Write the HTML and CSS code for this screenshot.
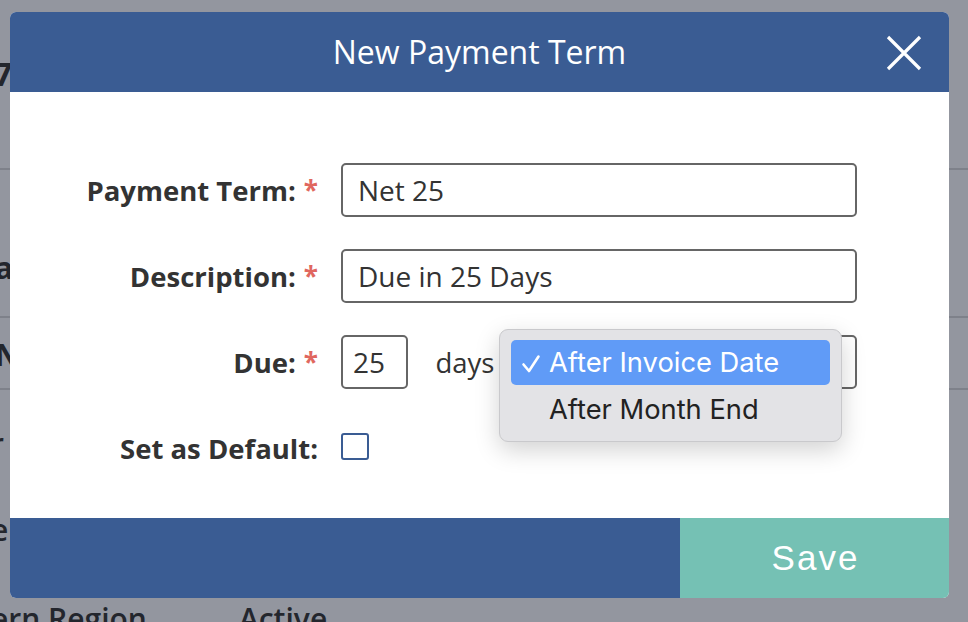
FILE: index.html
```html
<!DOCTYPE html>
<html>
<head>
<meta charset="utf-8">
<link rel="stylesheet" href="styles.css">
</head>
<body>
<div class="page">
  <div class="bg-row r1"><span class="bg-big">7</span></div>
  <div class="bg-row r2"><span class="bg-b">a</span></div>
  <div class="bg-row r3"><span class="bg-b">N</span></div>
  <div class="bg-row r4"><span class="bg-n">r</span></div>
  <div class="bg-row r5"><span class="bg-n">e</span></div>
  <div class="bg-row r6"><span class="bg-n">ern Region</span><span class="bg-n act">Active</span></div>
</div>

<div class="modal">
  <div class="modal-header">
    <h1 class="modal-title">New Payment Term</h1>
    <button class="close" aria-label="Close">
      <svg width="36" height="36" viewBox="0 0 36 36"><path d="M2 2 L34 34 M34 2 L2 34" stroke="#fff" stroke-width="3.2" stroke-linecap="butt" fill="none"/></svg>
    </button>
  </div>
  <form class="modal-body">
    <label class="lbl">Payment Term:<span class="req">*</span></label>
    <div class="field"><div class="input wide">Net 25</div></div>

    <label class="lbl">Description:<span class="req">*</span></label>
    <div class="field"><div class="input wide">Due in 25 Days</div></div>

    <label class="lbl">Due:<span class="req">*</span></label>
    <div class="field due">
      <div class="input small">25</div>
      <span class="days">days</span>
      <div class="select"></div>
      <div class="popup">
        <div class="opt sel"><svg class="check" width="20" height="20" viewBox="0 0 20 20"><path d="M2.5 10.5 L8 17 L17.5 2.5" stroke="#fff" stroke-width="2.6" fill="none" stroke-linecap="round" stroke-linejoin="round"/></svg>After Invoice Date</div>
        <div class="opt">After Month End</div>
      </div>
    </div>

    <label class="lbl">Set as Default:</label>
    <div class="field"><span class="checkbox"></span></div>
  </form>
  <div class="modal-footer">
    <div class="spacer"></div>
    <button class="save">Save</button>
  </div>
</div>
</body>
</html>
```
FILE: styles.css
```css
* { box-sizing: border-box; }
html, body { margin: 0; padding: 0; }
body {
  width: 968px;
  height: 622px;
  overflow: hidden;
  background: #93969f;
  font-family: "Open Sans", "Noto Sans", sans-serif;
  position: relative;
}

/* dimmed page behind the overlay */
.page { display: flex; flex-direction: column; }
.bg-row {
  display: flex;
  align-items: flex-start;
  color: #23262d;
  border-bottom: 2px solid #7e818a;
  line-height: 36px;
}
.bg-row.r1 { height: 170px; padding-top: 56px; }
.bg-row.r2 { height: 148px; padding-top: 80px; }
.bg-row.r3 { height: 72px; padding-top: 19px; }
.bg-row.r4 { height: 90px; padding-top: 36px; border-bottom: none; }
.bg-row.r5 { height: 90px; padding-top: 32px; border-bottom: none; }
.bg-row.r6 { height: 52px; padding-top: 31px; border-bottom: none; }
.bg-big { font-size: 32px; font-weight: 700; margin-left: -6px; }
.bg-b { font-size: 30px; font-weight: 700; margin-left: -5px; }
.bg-n { font-size: 30px; font-weight: 600; margin-left: -9px; }
.bg-n.act { margin-left: 92px; }

/* modal */
.modal {
  position: absolute;
  left: 10px;
  top: 12px;
  width: 939px;
  height: 586px;
  background: #fff;
  border-radius: 6px;
  overflow: hidden;
  display: flex;
  flex-direction: column;
}
.modal-header {
  height: 80px;
  background: #3a5c93;
  display: flex;
  align-items: center;
  justify-content: center;
  position: relative;
}
.modal-title {
  margin: 0 0 2px 0;
  color: #fff;
  font-weight: 400;
  font-size: 32px;
}
.close {
  position: absolute;
  right: 27px;
  top: 23px;
  width: 36px;
  height: 36px;
  padding: 0;
  border: none;
  background: none;
}
.close svg { display: block; }

.modal-body {
  flex: 1;
  margin: 0;
  padding-top: 71px;
  display: grid;
  grid-template-columns: 308px 516px;
  grid-auto-rows: 54px;
  column-gap: 23px;
  row-gap: 32px;
  align-content: start;
}
.lbl {
  display: flex;
  align-items: center;
  justify-content: flex-end;
  font-weight: 700;
  font-size: 27.5px;
  color: #333;
  white-space: nowrap;
}
.req {
  color: #e0675f;
  margin-left: 8px;
  font-size: 26px;
}
.field {
  display: flex;
  align-items: center;
  position: relative;
}
.input {
  border: 2px solid #666;
  border-radius: 5px;
  height: 54px;
  display: flex;
  align-items: center;
  padding-left: 15px;
  font-size: 28px;
  color: #333;
}
.input.wide { width: 516px; }
.input.small { width: 68px; padding-left: 10px; }
.days {
  margin-left: 27px;
  font-size: 27.5px;
  color: #333;
}
.select {
  margin-left: 6px;
  width: 360px;
  height: 54px;
  border: 2px solid #666;
  border-radius: 5px;
}
.popup {
  position: absolute;
  left: 158px;
  top: -6px;
  width: 343px;
  height: 113px;
  background: #e3e3e6;
  border: 1px solid #c9c9cc;
  border-radius: 9px;
  box-shadow: 0 8px 24px rgba(0,0,0,0.18);
  padding: 10px 11px;
  font-family: "Inter", "Liberation Sans", sans-serif;
}
.opt {
  height: 45px;
  display: flex;
  align-items: center;
  padding-left: 38px;
  font-size: 27.3px;
  color: #222;
  position: relative;
  border-radius: 5px;
}
.opt + .opt { padding-top: 4px; }
.opt.sel {
  background: #609bf7;
  color: #fff;
}
.check {
  position: absolute;
  left: 10px;
  top: 14px;
}
.checkbox {
  width: 28px;
  height: 27px;
  border: 2px solid #3a5c93;
  border-radius: 3px;
  margin-top: -3px;
}

.modal-footer {
  height: 80px;
  display: flex;
}
.spacer { flex: 1; background: #3a5c93; }
.save {
  width: 269px;
  border: none;
  background: #75c1b4;
  color: #fff;
  font-family: "Liberation Sans", Arial, sans-serif;
  font-size: 35px;
  letter-spacing: 2px;
  padding: 0 0 0 2px;
}
```
